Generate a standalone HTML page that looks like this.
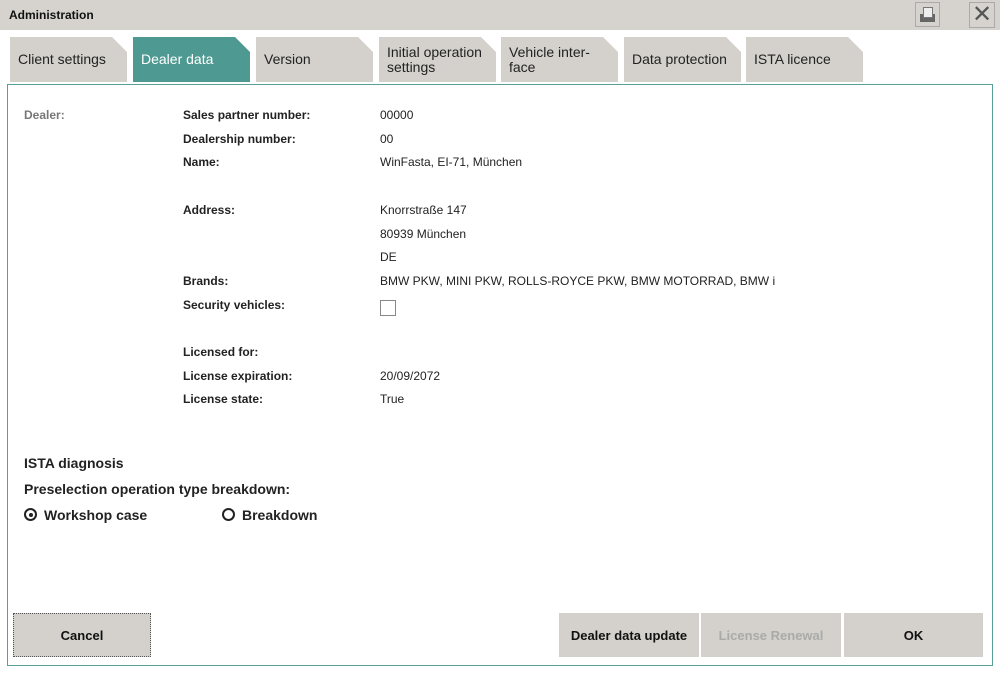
<!DOCTYPE html><html><head><style>
body{margin:0;width:1000px;height:673px;background:#fff;font-family:"Liberation Sans",Arial,sans-serif;position:relative;overflow:hidden}
.tb{position:absolute;left:0;top:0;width:1000px;height:30px;background:#d6d3ce}
.tb b{position:absolute;left:9px;top:8px;font-size:12px;color:#111}
.tab{position:absolute;top:37px;width:117px;height:45px;background:#d4d1cc;clip-path:polygon(0 0,calc(100% - 15px) 0,100% 15px,100% 100%,0 100%);font-size:14px;color:#222;box-sizing:border-box;padding-left:8px;display:flex;align-items:center;line-height:15px}
.tab.a{background:#4e9a92;color:#fff}
.panel{position:absolute;left:7px;top:84px;width:984px;height:580px;border:1.5px solid #5a9e98}
.t{position:absolute;font-size:12px;color:#222}
.l{position:absolute;left:183px;font-size:12px;font-weight:bold;color:#222}
.btn{position:absolute;top:613px;height:44px;background:#d4d1cc;font-size:13px;font-weight:bold;display:flex;align-items:center;justify-content:center;color:#111}
</style></head><body>
<div class="tb"><b>Administration</b>
<div style="position:absolute;left:915px;top:2px;width:25px;height:25px;border:1px solid #aaa;box-sizing:border-box">
<div style="position:absolute;left:4px;top:11px;width:15px;height:8px;background:#666"></div>
<div style="position:absolute;left:7px;top:4px;width:8px;height:9px;background:#eee;border:1px solid #777"></div></div>
<div style="position:absolute;left:969px;top:2px;width:26px;height:26px;border:1px solid #aaa;box-sizing:border-box;font-size:24px;line-height:24px;text-align:center;color:#555">✕</div></div>
<div class="tab" style="left:10px">Client settings</div>
<div class="tab a" style="left:133px">Dealer data</div>
<div class="tab" style="left:256px">Version</div>
<div class="tab" style="left:379px">Initial operation<br>settings</div>
<div class="tab" style="left:501px">Vehicle inter-<br>face</div>
<div class="tab" style="left:624px">Data protection</div>
<div class="tab" style="left:746px">ISTA licence</div>
<div class="panel"></div>
<div class="t" style="left:24px;top:108px;color:#777;font-weight:bold">Dealer:</div>
<div class="l" style="top:108px">Sales partner number:</div><div class="t" style="left:380px;top:108px">00000</div>
<div class="l" style="top:132px">Dealership number:</div><div class="t" style="left:380px;top:132px">00</div>
<div class="l" style="top:155px">Name:</div><div class="t" style="left:380px;top:155px">WinFasta, EI-71, München</div>
<div class="l" style="top:203px">Address:</div><div class="t" style="left:380px;top:203px">Knorrstraße 147</div>
<div class="t" style="left:380px;top:227px">80939 München</div>
<div class="t" style="left:380px;top:250px">DE</div>
<div class="l" style="top:274px">Brands:</div><div class="t" style="left:380px;top:274px">BMW PKW, MINI PKW, ROLLS-ROYCE PKW, BMW MOTORRAD, BMW i</div>
<div class="l" style="top:298px">Security vehicles:</div><div style="position:absolute;left:380px;top:300px;width:16px;height:16px;border:1px solid #888;box-sizing:border-box"></div>
<div class="l" style="top:345px">Licensed for:</div>
<div class="l" style="top:369px">License expiration:</div><div class="t" style="left:380px;top:369px">20/09/2072</div>
<div class="l" style="top:392px">License state:</div><div class="t" style="left:380px;top:392px">True</div>
<div class="t" style="left:24px;top:455px;font-size:14px;font-weight:bold">ISTA diagnosis</div>
<div class="t" style="left:24px;top:481px;font-size:14px;font-weight:bold">Preselection operation type breakdown:</div>
<div style="position:absolute;left:24px;top:508px;width:13px;height:13px;border:2px solid #222;border-radius:50%;box-sizing:border-box"><div style="position:absolute;left:2.5px;top:2.5px;width:4px;height:4px;background:#222;border-radius:50%"></div></div>
<div class="t" style="left:44px;top:507px;font-size:14px;font-weight:bold">Workshop case</div>
<div style="position:absolute;left:222px;top:508px;width:13px;height:13px;border:2px solid #222;border-radius:50%;box-sizing:border-box"></div>
<div class="t" style="left:242px;top:507px;font-size:14px;font-weight:bold">Breakdown</div>
<div class="btn" style="left:13px;width:138px;border:1px dotted #555;box-sizing:border-box">Cancel</div>
<div class="btn" style="left:559px;width:140px">Dealer data update</div>
<div class="btn" style="left:701px;width:140px;color:#aaa">License Renewal</div>
<div class="btn" style="left:844px;width:139px">OK</div>
</body></html>
